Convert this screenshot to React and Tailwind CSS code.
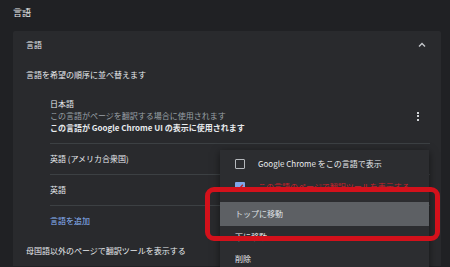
import React from "react";

const font = { fontFamily: '"Noto Sans CJK JP", "Noto Sans", sans-serif' };

function Checkbox({ checked }) {
  if (checked) {
    return (
      <div className="w-[10px] h-[10px] rounded-[1px] bg-[#7fa6e8] flex items-center justify-center shrink-0">
        <svg width="8" height="8" viewBox="0 0 8 8">
          <path d="M1.2 4.2 L3.2 6 L6.8 1.8" fill="none" stroke="#b8232b" strokeWidth="1.4" />
        </svg>
      </div>
    );
  }
  return <div className="w-[10px] h-[10px] rounded-[1px] border-[1.5px] border-[#b5b8bc] shrink-0" />;
}

export default function App() {
  return (
    <div
      className="relative w-[450px] h-[267px] overflow-hidden bg-[#202124] text-[#e8eaed] text-[8px] leading-[12px]"
      style={font}
    >
      <div className="pt-[7px] pl-[13px] text-[9px] leading-[12px] text-[#e8eaed]">言語</div>
      <div className="mt-[12px] ml-[13px] w-[428px] bg-[#292a2d] rounded-t-[2px]">
        <div className="h-[28px] flex items-center justify-between pl-[13px] pr-[15px]">
          <span>言語</span>
          <svg width="8" height="6" viewBox="0 0 8 6">
            <path d="M1 4.5 L4 1.5 L7 4.5" fill="none" stroke="#c4c7cb" strokeWidth="1.4" />
          </svg>
        </div>
        <div className="h-[32px] flex items-center pl-[13px]">言語を希望の順序に並べ替えます</div>
        <div className="pl-[37px] pr-[11px]">
          <div className="flex items-center justify-between pt-[7px] pb-[9px] border-b border-[#3c4043]">
            <div className="flex flex-col">
              <span>日本語</span>
              <span className="text-[#9aa0a6]">この言語がページを翻訳する場合に使用されます</span>
              <span className="font-bold">この言語が Google Chrome UI の表示に使用されます</span>
            </div>
            <div className="mr-[11px] flex flex-col gap-[1.5px]">
              <div className="w-[2px] h-[2px] bg-[#d0d3d6]" />
              <div className="w-[2px] h-[2px] bg-[#d0d3d6]" />
              <div className="w-[2px] h-[2px] bg-[#d0d3d6]" />
            </div>
          </div>
          <div className="h-[31px] flex items-center border-b border-[#3c4043]">英語 (アメリカ合衆国)</div>
          <div className="h-[31px] flex items-center border-b border-[#3c4043]">英語</div>
          <div className="h-[30px] flex items-center text-[#8ab4f8]">言語を追加</div>
        </div>
        <div className="h-[30px] flex items-center pl-[13px]">母国語以外のページで翻訳ツールを表示する</div>
      </div>

      <div className="absolute left-[220px] top-[150px] w-[209px] h-[130px] bg-[#2c2d30] shadow-[0_2px_8px_rgba(0,0,0,0.5)] pt-[3px]">
        <div className="h-[22px] flex items-center pl-[15px] gap-[13px]">
          <Checkbox />
          <span>Google Chrome をこの言語で表示</span>
        </div>
        <div className="h-[23px] flex items-center pl-[15px] gap-[13px]">
          <Checkbox checked />
          <span className="text-[#c8222a]">この言語のページで翻訳ツールを表示する</span>
        </div>
        <div className="h-[4px]" />
        <div className="h-[24px] flex items-center pl-[15px] bg-[#5d6064] text-[#dfe1e4]">トップに移動</div>
        <div className="h-[22px] flex items-center pl-[15px]">下に移動</div>
        <div className="h-[22px] flex items-center pl-[15px]">削除</div>
      </div>

      <div className="absolute left-[205px] top-[187px] w-[235px] h-[54px] border-[5px] border-[#d3111b] rounded-[9px]" />
    </div>
  );
}
